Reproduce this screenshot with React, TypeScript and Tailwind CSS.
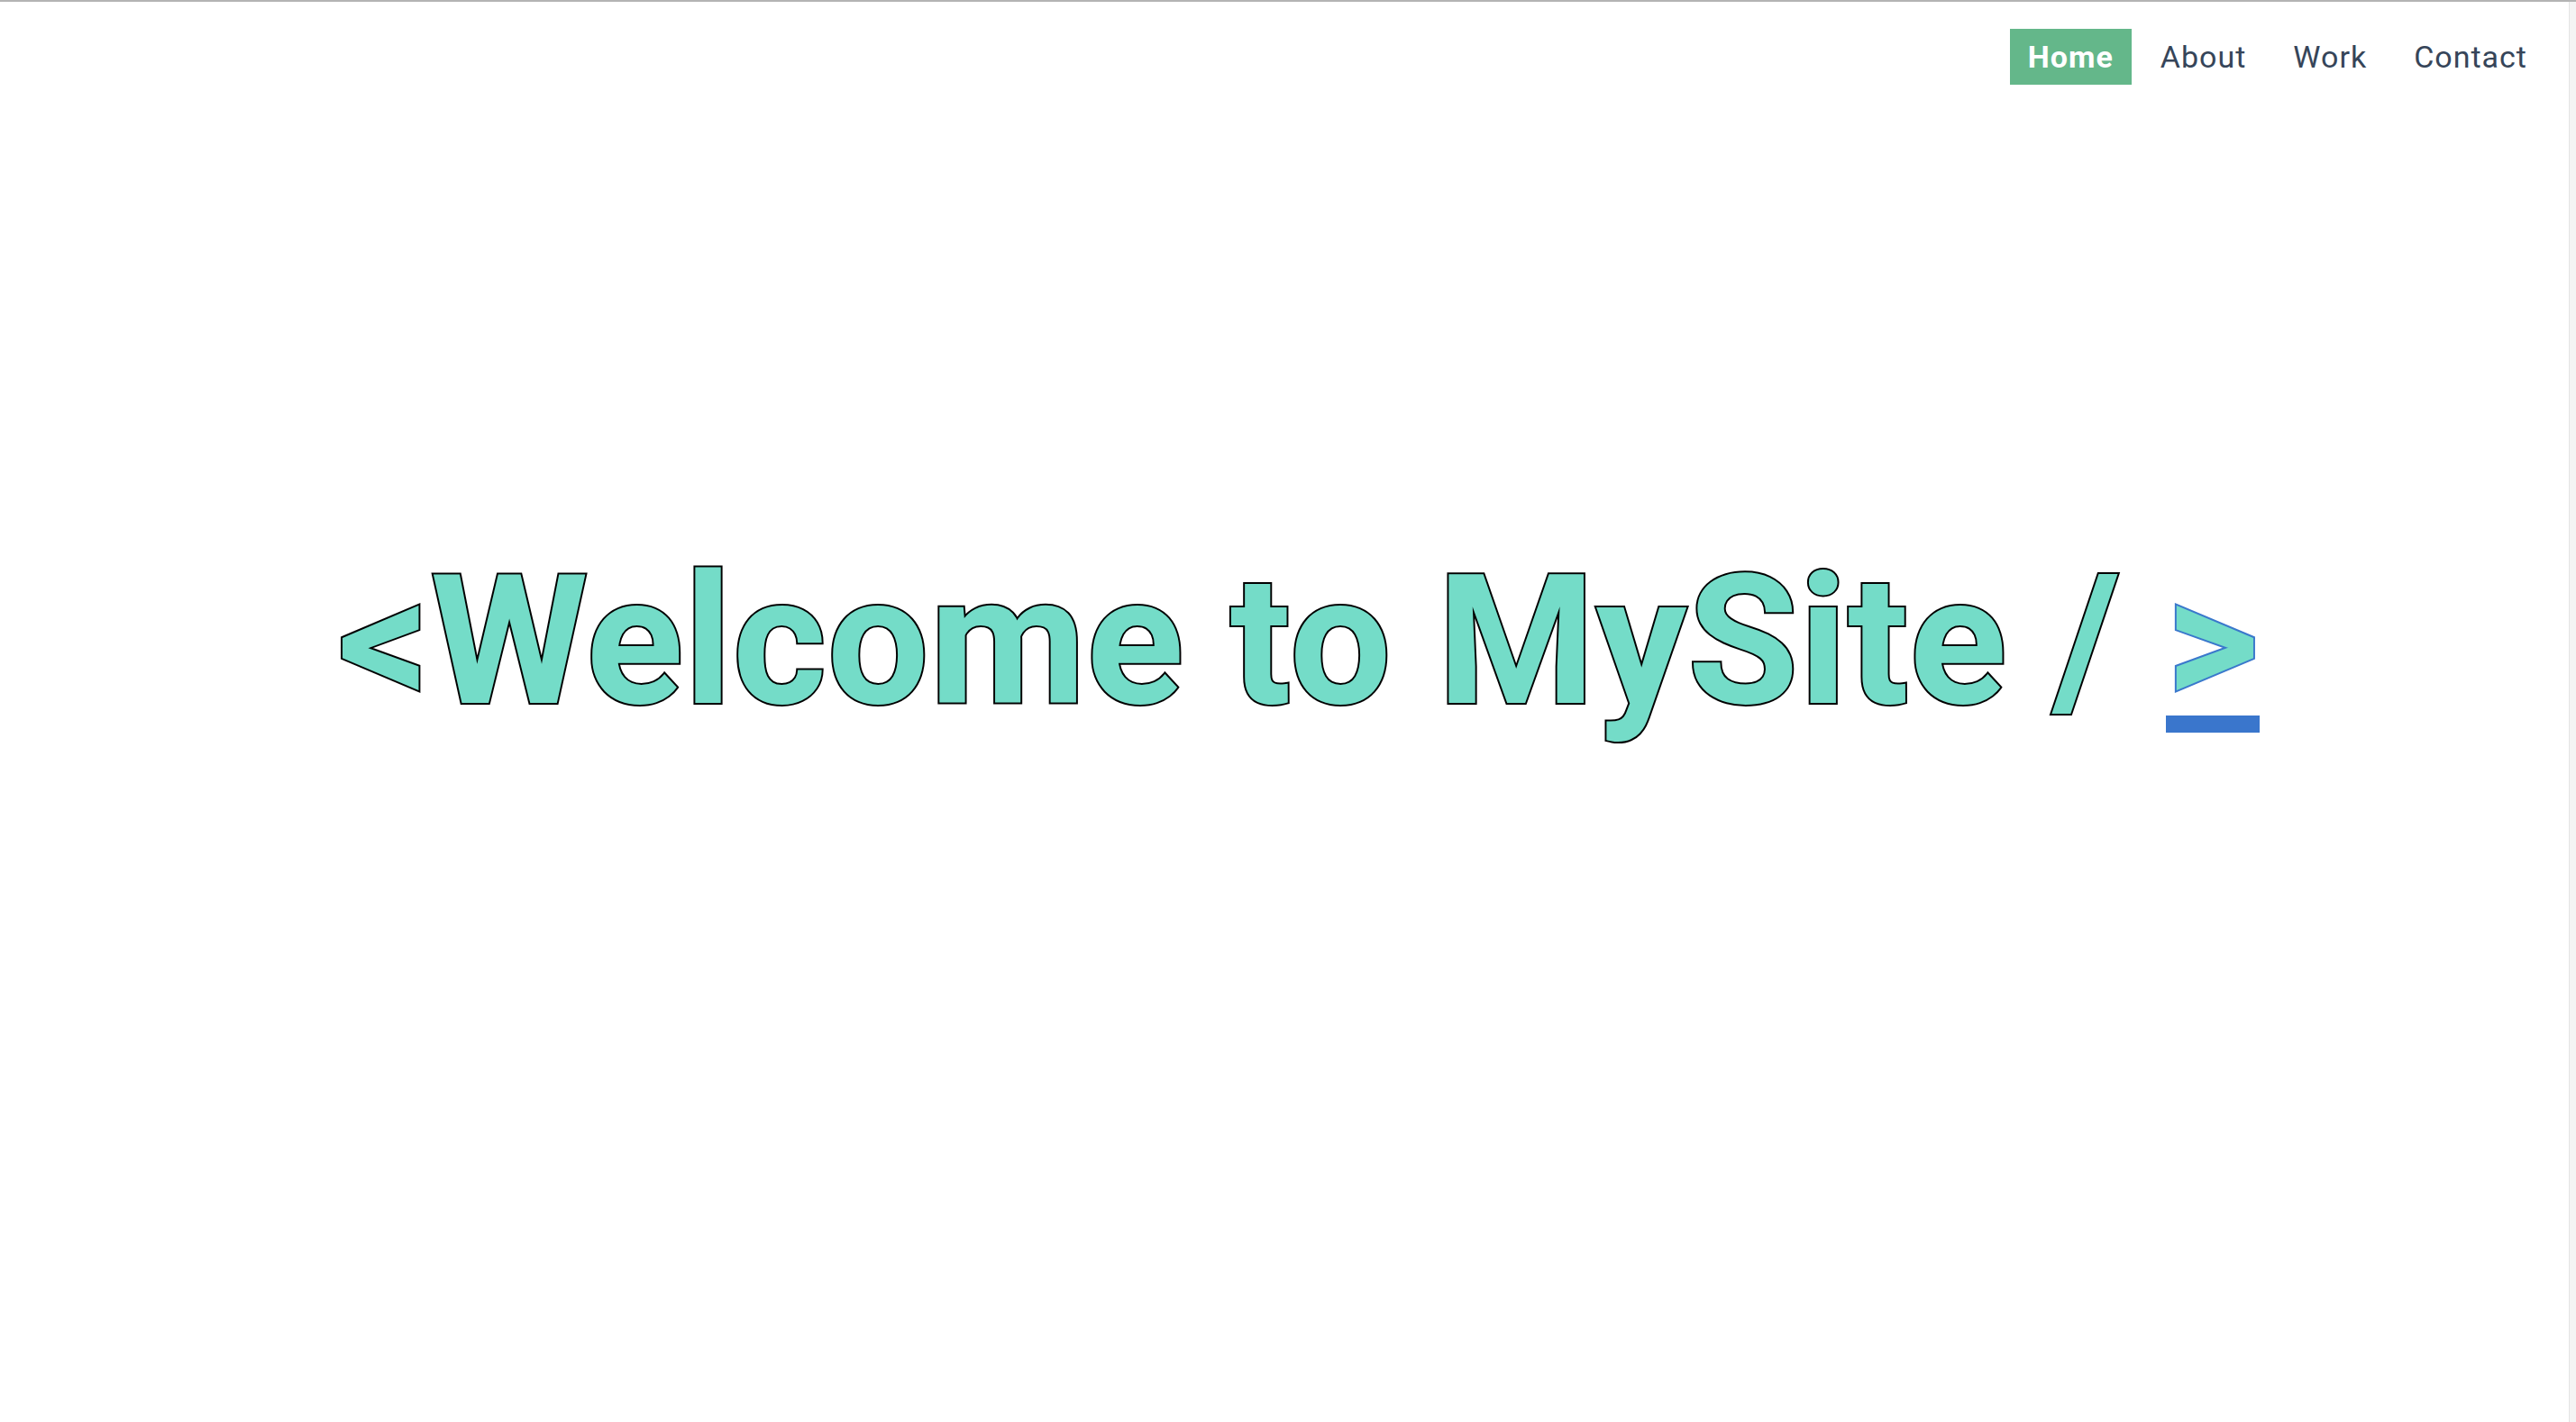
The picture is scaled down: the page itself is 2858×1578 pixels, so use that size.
import React from "react";

export default function App() {
  const links = ["Home", "About", "Work", "Contact"];
  return (
    <div
      className="w-[2858px] h-[1578px] bg-white border-t-2 border-[#b4b4b4] flex overflow-hidden"
      style={{ fontFamily: "Roboto, 'Liberation Sans', sans-serif" }}
    >
      <div className="flex-1 flex flex-col">
        <header className="flex justify-end pt-[30px] pr-[26px]">
          <nav className="flex gap-[12px]">
            {links.map((l, i) => (
              <a
                key={l}
                className={
                  i === 0
                    ? "px-[20px] py-[11px] text-[34px] leading-[40px] tracking-[1px] font-bold text-white bg-[#64b78a]"
                    : "px-[20px] py-[11px] text-[34px] leading-[40px] tracking-[1px] font-normal text-[#364559]"
                }
              >
                {l}
              </a>
            ))}
          </nav>
        </header>
        <main className="flex justify-center pt-[501px] pl-[32px]">
          <h1 className="text-[200px] leading-[234px] tracking-[0.8px] font-bold text-[#74dcc8] [-webkit-text-stroke:4px_#000000] [paint-order:stroke_fill] whitespace-pre">
            {"<Welcome to MySite / "}
            <span className="relative inline-block [-webkit-text-stroke:4px_#3a78cc] [paint-order:stroke_fill]">
              &gt;
              <span className="absolute left-0 right-0 top-[199px] h-[19px] bg-[#3a76cc]" />
            </span>
          </h1>
        </main>
      </div>
      <div className="w-[8px] border-l border-[#e4e4e4] bg-[#f4f4f4]" />
    </div>
  );
}
